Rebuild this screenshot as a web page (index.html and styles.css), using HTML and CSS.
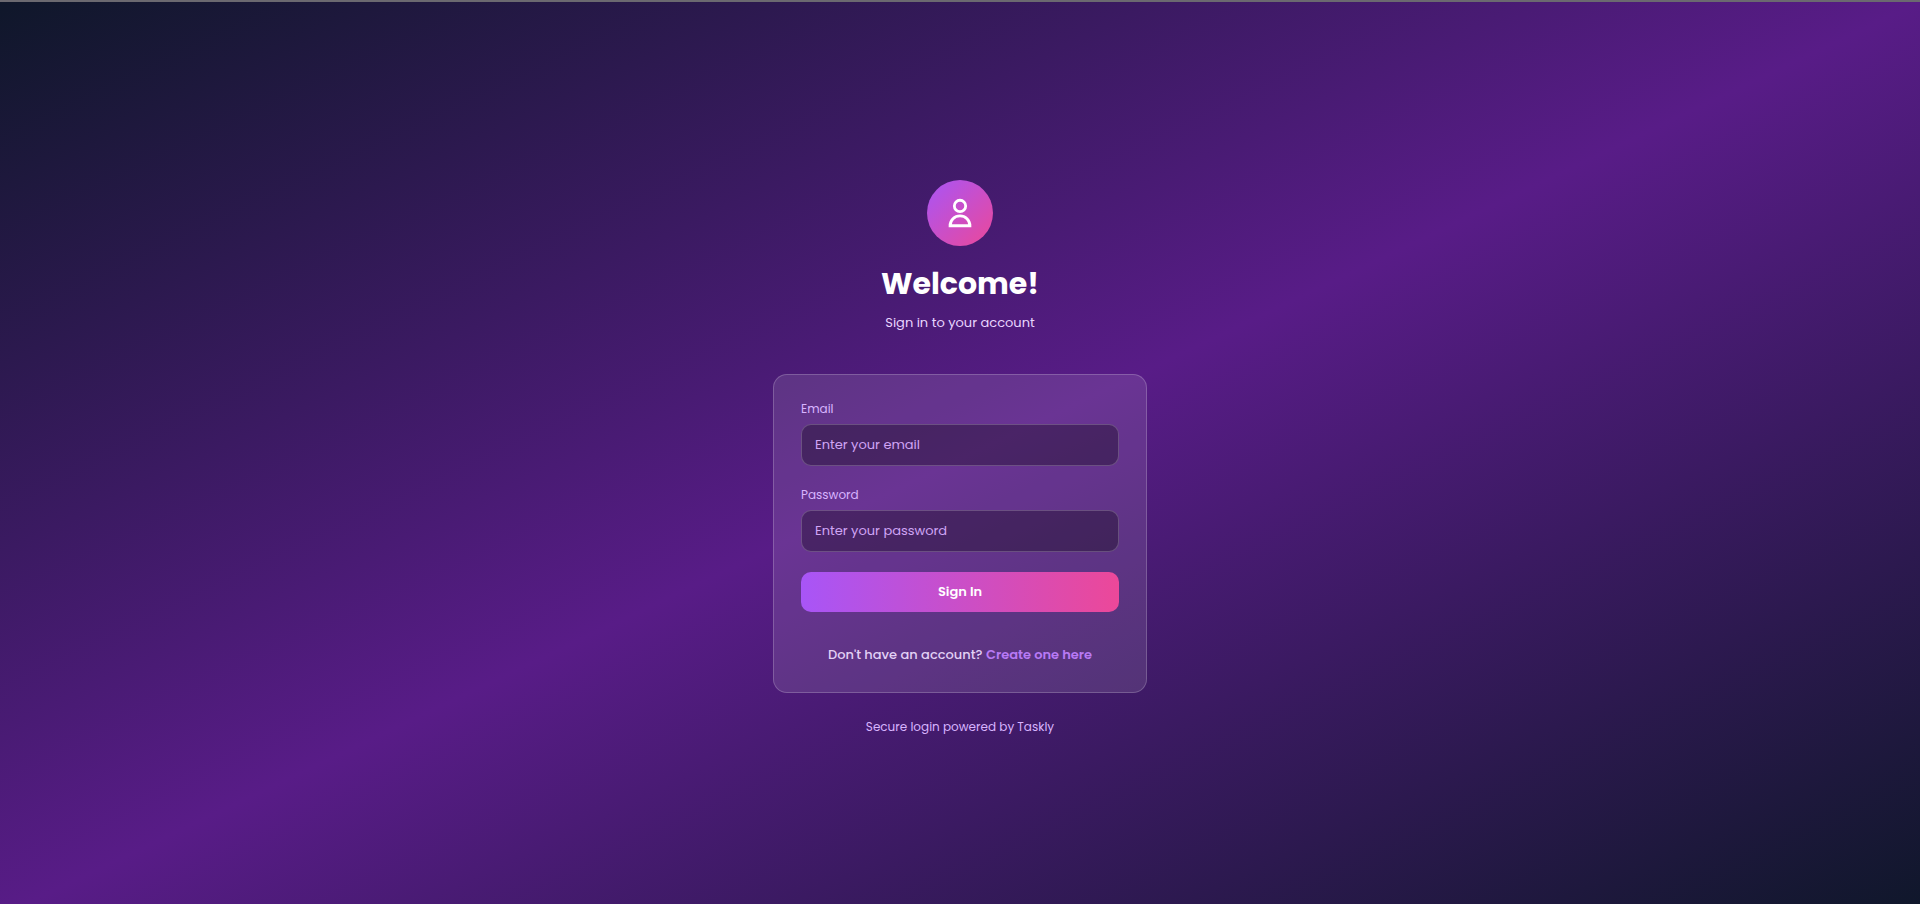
FILE: index.html
```html
<!DOCTYPE html>
<html lang="en">
<head>
<meta charset="utf-8">
<meta name="viewport" content="width=device-width, initial-scale=1">
<title>Taskly</title>
<link rel="stylesheet" href="styles.css">
</head>
<body>
<main class="page">
  <div class="login">
    <header class="intro">
      <div class="avatar">
        <svg class="avatar-icon" viewBox="0 0 24 24" fill="none" stroke="currentColor" stroke-width="2" aria-hidden="true">
          <path d="M16 7a4 4 0 1 1-8 0 4 4 0 0 1 8 0zM12 14a7 7 0 0 0-7 7h14a7 7 0 0 0-7-7z"/>
        </svg>
      </div>
      <h1 class="title">Welcome!</h1>
      <p class="subtitle">Sign in to your account</p>
    </header>
    <section class="card">
      <form class="form">
        <div class="field">
          <label class="label" for="email">Email</label>
          <input class="input" id="email" type="email" placeholder="Enter your email">
        </div>
        <div class="field">
          <label class="label" for="password">Password</label>
          <input class="input" id="password" type="password" placeholder="Enter your password">
        </div>
        <button class="submit" type="submit">Sign In</button>
      </form>
      <p class="signup">Don't have an account? <a class="link" href="#">Create one here</a></p>
    </section>
    <p class="note">Secure login powered by Taskly</p>
  </div>
</main>
</body>
</html>
```
FILE: styles.css
```css
* {
  box-sizing: border-box;
}

body {
  margin: 0;
  font-family: "Poppins", "Inter", sans-serif;
  color: #fff;
}

h1,
p {
  margin: 0;
}

.page {
  min-height: 100vh;
  display: flex;
  align-items: center;
  justify-content: center;
  padding: 24px 14px;
  padding-bottom: 14px;
  border-top: 2px solid #6b6970;
  background: linear-gradient(to bottom right, #0f172a, #581c87, #0f172a) 0 0 / 100% calc(100% + 12px);
}

.login {
  width: 100%;
  max-width: 374px;
}

.intro {
  display: flex;
  flex-direction: column;
  align-items: center;
  margin-bottom: 40px;
}

.avatar {
  display: flex;
  align-items: center;
  justify-content: center;
  width: 66px;
  height: 66px;
  margin-bottom: 18px;
  border-radius: 50%;
  background: linear-gradient(to bottom right, #a855f7, #ec4899);
}

.avatar-icon {
  width: 34px;
  height: 34px;
}

.title {
  margin-bottom: 8px;
  font-size: 30px;
  line-height: 40px;
  font-weight: 700;
}

.subtitle {
  font-size: 13px;
  line-height: 22px;
  color: #e9d5ff;
}

.card {
  padding: 25px 27px 27px;
  border: 1px solid rgba(255, 255, 255, 0.2);
  border-radius: 14px;
  background: rgba(255, 255, 255, 0.11);
}

.form {
  display: flex;
  flex-direction: column;
  gap: 20px;
}

.field {
  display: flex;
  flex-direction: column;
  gap: 6px;
}

.label {
  font-size: 12px;
  line-height: 18px;
  font-weight: 400;
  color: #d8b4fe;
}

.input {
  width: 100%;
  height: 42px;
  padding: 0 13px;
  border: 1px solid rgba(255, 255, 255, 0.2);
  border-radius: 10px;
  background: rgba(0, 0, 0, 0.3);
  font: inherit;
  font-size: 13px;
  color: #fff;
}

.input::placeholder {
  color: #d0a5f5;
  opacity: 1;
}

.submit {
  height: 40px;
  border: 0;
  border-radius: 10px;
  background: linear-gradient(to right, #a855f7, #ec4899);
  font: inherit;
  font-size: 13px;
  font-weight: 600;
  color: #fff;
}

.signup {
  margin-top: 33px;
  font-size: 13px;
  line-height: 20px;
  font-weight: 500;
  text-align: center;
  color: #e2d0f5;
}

.link {
  font-weight: 600;
  color: #b87af5;
  text-decoration: none;
}

.note {
  margin-top: 24px;
  font-size: 12px;
  line-height: 20px;
  text-align: center;
  color: #d8b4fe;
}
```
